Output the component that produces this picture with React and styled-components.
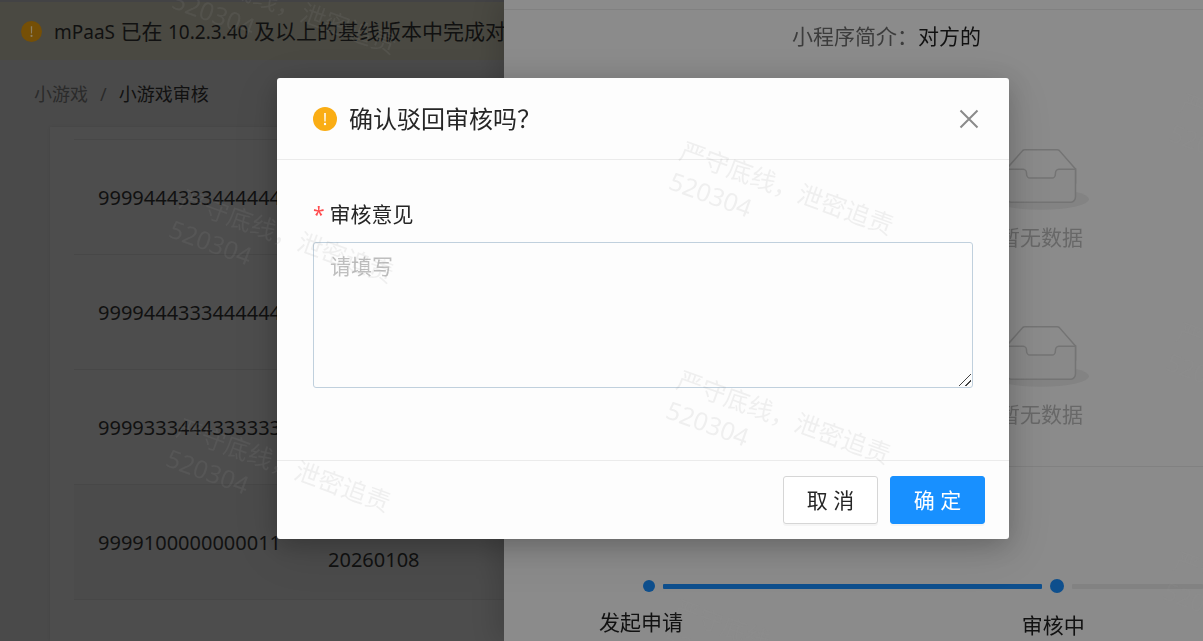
import React, { useState } from "react";
import styled, { createGlobalStyle } from "styled-components";

const rows = [
  { id: "9999444333444444", date: "" },
  { id: "9999444333444444", date: "" },
  { id: "9999333444333333", date: "" },
  { id: "9999100000000011", date: "20260108", active: true },
];

const marks = [
  { x: 190, y: -47 },
  { x: 187, y: 182 },
  { x: 184, y: 411 },
  { x: 687, y: 134 },
  { x: 684, y: 363 },
  { x: 681, y: 592 },
  { x: 1187, y: 86 },
  { x: 1184, y: 315 },
  { x: 1181, y: 544 },
];

function WarningIcon({ size, color, mark }) {
  return (
    <svg width={size} height={size} viewBox="0 0 24 24" aria-hidden="true">
      <circle cx="12" cy="12" r="12" fill={color} />
      <path d="M11.2 6h1.6l-.2 8.4h-1.2z" fill={mark} />
      <circle cx="12" cy="17" r="1.2" fill={mark} />
    </svg>
  );
}

function EmptyBox() {
  return (
    <Empty>
      <svg width="96" height="62" viewBox="0 0 64 41" aria-hidden="true">
        <g transform="translate(0 1)" fill="none" fillRule="evenodd">
          <ellipse cx="32" cy="33" rx="32" ry="7" fill="#838383" />
          <g fillRule="nonzero" stroke="#747474">
            <path d="M55 12.76L44.854 1.258C44.367.474 43.656 0 42.907 0H21.093c-.749 0-1.46.474-1.947 1.257L9 12.761V22h46v-9.24z" />
            <path
              d="M41.613 15.931c0-1.605.994-2.93 2.227-2.931H55v18.137C55 33.26 53.68 35 52.05 35h-40.1C10.32 35 9 33.259 9 31.137V13h11.16c1.233 0 2.227 1.323 2.227 2.928v.022c0 1.605 1.005 2.901 2.237 2.901h14.752c1.232 0 2.237-1.308 2.237-2.913v-.007z"
              fill="#898989"
            />
          </g>
        </g>
      </svg>
      <p>暂无数据</p>
    </Empty>
  );
}

export default function App() {
  const [opinion, setOpinion] = useState("");

  return (
    <>
      <GlobalStyle />
      <Page>
        <Banner>
          <WarningIcon size={21} color="#754f06" mark="#8c7f62" />
          <p>
            <Latin>mPaaS</Latin> 已在 <Latin>10.2.3.40</Latin> 及以上的基线版本中完成对
          </p>
        </Banner>
        <Breadcrumb>
          <a href="#games">小游戏</a>
          <i>/</i>
          <span>小游戏审核</span>
        </Breadcrumb>
        <Card>
          <Table>
            <tbody>
              {rows.map((row, index) => (
                <Row key={index} $active={row.active}>
                  <td>{row.id}</td>
                  <td className="date">{row.date}</td>
                </Row>
              ))}
            </tbody>
          </Table>
        </Card>
      </Page>

      <Drawer>
        <Intro>
          <span>小程序简介：</span>
          对方的
        </Intro>
        <EmptyList>
          <EmptyBox />
          <EmptyBox />
        </EmptyList>
        <Progress>
          <Rail>
            <Dot $size={12} />
            <Line $done />
            <Dot $size={14} />
            <Line />
          </Rail>
          <StepLabels>
            <span>发起申请</span>
            <span className="current">审核中</span>
          </StepLabels>
        </Progress>
      </Drawer>

      <ModalWrap>
        <Modal role="dialog" aria-labelledby="reject-title">
          <ModalHeader>
            <WarningIcon size={24} color="#faad14" mark="#fff" />
            <h2 id="reject-title">确认驳回审核吗？</h2>
            <CloseButton type="button" aria-label="关闭">
              <svg width="20" height="20" viewBox="0 0 20 20">
                <path d="M1.5 1.5l17 17M18.5 1.5l-17 17" stroke="#8a8a8a" strokeWidth="2" />
              </svg>
            </CloseButton>
          </ModalHeader>
          <ModalBody>
            <label htmlFor="opinion">
              <em>*</em>
              审核意见
            </label>
            <TextArea
              id="opinion"
              placeholder="请填写"
              value={opinion}
              onChange={(e) => setOpinion(e.target.value)}
            />
          </ModalBody>
          <ModalFooter>
            <Button type="button">取 消</Button>
            <Button type="button" $primary>确 定</Button>
          </ModalFooter>
        </Modal>
      </ModalWrap>

      <Watermark aria-hidden="true">
        {marks.map((mark, index) => (
          <Mark key={index} $x={mark.x} $y={mark.y}>
            严守底线，泄密追责
            <br />
            520304
          </Mark>
        ))}
      </Watermark>
    </>
  );
}

const GlobalStyle = createGlobalStyle`
  * {
    box-sizing: border-box;
  }
  html, body, #root {
    height: 100%;
  }
  body {
    margin: 0;
    overflow: hidden;
    background: #4a4a4a;
    color: #111;
    font-family: "Noto Sans", "Noto Sans CJK SC", sans-serif;
    font-size: 21px;
    line-height: 32px;
  }
  h2, p {
    margin: 0;
  }
  button, textarea {
    font: inherit;
  }
`;

const Page = styled.main`
  min-height: 100%;
  display: flex;
  flex-direction: column;
`;

const Banner = styled.div`
  display: flex;
  align-items: center;
  gap: 12px;
  height: 60px;
  border-top: 2px solid #434345;
  padding: 0 21px;
  background: #4a4942;
  white-space: nowrap;
`;

const Latin = styled.span`
  font-size: 19px;
`;

const Breadcrumb = styled.nav`
  display: flex;
  gap: 12px;
  padding: 18px 34px 17px;
  font-size: 18px;
  a {
    color: #2b2b2b;
    text-decoration: none;
  }
  i {
    color: #2b2b2b;
    font-style: normal;
  }
`;

const Card = styled.section`
  flex: 1;
  margin-left: 50px;
  padding: 12px 0 0 24px;
  background: #4d4d4d;
  box-shadow: 0 0 3px rgba(0, 0, 0, 0.08);
`;

const Table = styled.table`
  width: 100%;
  table-layout: fixed;
  border-collapse: collapse;
  border-top: 1px solid #474747;
  font-size: 20px;
`;

const Row = styled.tr`
  height: 115px;
  border-bottom: 1px solid #474747;
  background: ${(props) => (props.$active ? "#4b4b4b" : "transparent")};
  td {
    padding: 2px 24px 0;
  }
  td:first-child {
    width: 230px;
  }
  .date {
    padding-bottom: 23px;
    vertical-align: bottom;
  }
`;

const Drawer = styled.aside`
  position: fixed;
  top: 0;
  right: 0;
  bottom: 0;
  width: calc(100% - 504px);
  padding-top: 9px;
  overflow: hidden;
  background: #8b8b8b;
  box-shadow: -8px 0 24px rgba(0, 0, 0, 0.14);
`;

const Intro = styled.div`
  padding: 10px 24px 10px 288px;
  border-top: 1px solid #818181;
  span {
    color: #3c3c3c;
  }
`;

const EmptyList = styled.div`
  display: flex;
  flex-direction: column;
  gap: 72px;
  padding: 86px 0 36px 375px;
  border-bottom: 1px solid #818181;
`;

const Empty = styled.div`
  display: flex;
  flex-direction: column;
  align-items: center;
  gap: 11px;
  color: #686868;
  svg {
    display: block;
  }
`;

const Progress = styled.div`
  padding-top: 112px;
`;

const Rail = styled.div`
  display: grid;
  grid-template-columns: 12px 26fr 14px 9fr;
  gap: 8px;
  align-items: center;
  padding-left: 139px;
`;

const Dot = styled.span`
  width: ${(props) => props.$size}px;
  height: ${(props) => props.$size}px;
  border-radius: 50%;
  background: #0e4f8d;
`;

const Line = styled.span`
  height: 5px;
  border-radius: 1px;
  background: ${(props) => (props.$done ? "#0e4f8d" : "#828282")};
`;

const StepLabels = styled.div`
  display: grid;
  grid-template-columns: 7fr 3fr;
  padding: 13px 0 0 95px;
  .current {
    padding-top: 3px;
  }
`;

const ModalWrap = styled.div`
  position: fixed;
  inset: 0;
  display: flex;
  justify-content: center;
  align-items: flex-start;
  padding: 78px 0 0 83px;
`;

const Modal = styled.div`
  width: 732px;
  max-width: 100%;
  border-radius: 3px;
  background: #fdfdfd;
  box-shadow: 0 6px 24px rgba(0, 0, 0, 0.2), 0 12px 48px rgba(0, 0, 0, 0.1);
  color: #262626;
`;

const ModalHeader = styled.header`
  display: flex;
  align-items: center;
  gap: 12px;
  height: 82px;
  padding: 0 30px 0 36px;
  border-bottom: 1px solid #ebebeb;
  h2 {
    flex: 1;
    font-size: 24px;
    font-weight: inherit;
  }
`;

const CloseButton = styled.button`
  display: flex;
  padding: 0;
  border: 0;
  background: none;
  cursor: pointer;
`;

const ModalBody = styled.div`
  padding: 38px 36px 72px;
  label {
    display: flex;
    gap: 5px;
    margin-bottom: 12px;
  }
  em {
    color: #ff4d4f;
    font-style: normal;
  }
`;

const TextArea = styled.textarea`
  display: block;
  width: 100%;
  height: 146px;
  padding: 7px 16px;
  border: 1px solid #c0d0dd;
  border-radius: 3px;
  outline: none;
  background: transparent;
  color: #262626;
  resize: vertical;
  &::placeholder {
    color: #bfbfbf;
  }
  &::-webkit-resizer {
    background: linear-gradient(
        135deg,
        transparent 46%,
        #444 46% 54%,
        transparent 54% 75%,
        #444 75% 83%,
        transparent 83%
      )
      2px 2px / 12px 12px no-repeat;
  }
`;

const ModalFooter = styled.footer`
  display: flex;
  justify-content: flex-end;
  gap: 12px;
  padding: 15px 24px;
  border-top: 1px solid #ebebeb;
`;

const Button = styled.button`
  width: 95px;
  height: 48px;
  padding: 0;
  border: 1px solid ${(props) => (props.$primary ? "#1890ff" : "#d6d6d6")};
  border-radius: 3px;
  background: ${(props) => (props.$primary ? "#1890ff" : "#fff")};
  box-shadow: 0 2px 0 rgba(0, 0, 0, 0.03);
  color: ${(props) => (props.$primary ? "#fff" : "#262626")};
  cursor: pointer;
`;

const Watermark = styled.div`
  position: fixed;
  inset: 0;
  overflow: hidden;
  pointer-events: none;
`;

const Mark = styled.div`
  position: absolute;
  left: ${(props) => props.$x}px;
  top: ${(props) => props.$y}px;
  transform: rotate(20deg);
  transform-origin: 0 0;
  color: rgba(150, 150, 150, 0.13);
  font-size: 25px;
  white-space: nowrap;
`;
